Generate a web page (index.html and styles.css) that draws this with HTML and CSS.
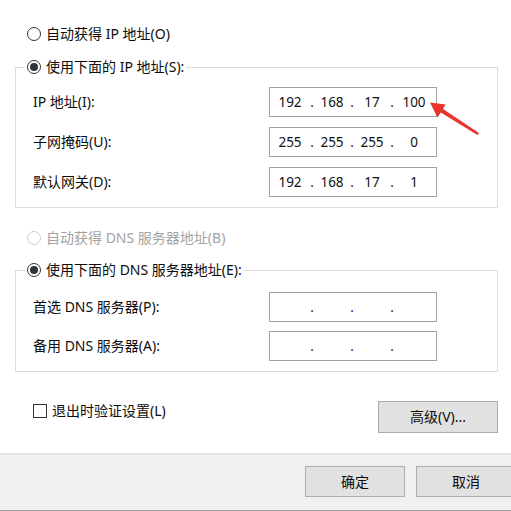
FILE: index.html
```html
<!DOCTYPE html>
<html lang="zh-CN">
<head>
<meta charset="utf-8">
<title>IPv4 属性</title>
<link rel="stylesheet" href="styles.css">
</head>
<body>
<div class="dialog">
  <div class="main">
    <label class="opt opt-top"><span class="radio"></span><span>自动获得 IP 地址(O)</span></label>

    <fieldset class="group group-ip">
      <legend><label class="opt"><span class="radio on"></span><span>使用下面的 IP 地址(S):</span></label></legend>
      <div class="fields">
        <div class="label">IP 地址(I):</div>
        <div class="ip"><span>192</span><i>.</i><span>168</span><i>.</i><span>17</span><i>.</i><span>100</span></div>
        <div class="label">子网掩码(U):</div>
        <div class="ip"><span>255</span><i>.</i><span>255</span><i>.</i><span>255</span><i>.</i><span>0</span></div>
        <div class="label">默认网关(D):</div>
        <div class="ip"><span>192</span><i>.</i><span>168</span><i>.</i><span>17</span><i>.</i><span>1</span></div>
      </div>
    </fieldset>

    <label class="opt opt-top opt-dns disabled"><span class="radio"></span><span>自动获得 DNS 服务器地址(B)</span></label>

    <fieldset class="group group-dns">
      <legend><label class="opt"><span class="radio on"></span><span>使用下面的 DNS 服务器地址(E):</span></label></legend>
      <div class="fields fields-dns">
        <div class="label">首选 DNS 服务器(P):</div>
        <div class="ip"><span></span><i>.</i><span></span><i>.</i><span></span><i>.</i><span></span></div>
        <div class="label">备用 DNS 服务器(A):</div>
        <div class="ip"><span></span><i>.</i><span></span><i>.</i><span></span><i>.</i><span></span></div>
      </div>
    </fieldset>

    <div class="bottom-row">
      <label class="check-opt"><span class="checkbox"></span><span>退出时验证设置(L)</span></label>
      <button class="btn btn-adv" type="button">高级(V)...</button>
    </div>
  </div>

  <div class="footer">
    <button class="btn btn-foot" type="button">确定</button>
    <button class="btn btn-foot" type="button">取消</button>
  </div>
</div>

<svg class="arrow" width="511" height="511" viewBox="0 0 511 511" aria-hidden="true">
  <polygon points="430,102.5 445.5,104.5 443,109 479,133 477.4,135 440.8,112.4 437.5,117.5" fill="#e9352d"/>
</svg>
</body>
</html>
```

FILE: styles.css
```css
html, body {
  margin: 0;
  padding: 0;
  width: 511px;
  height: 511px;
  overflow: hidden;
  background: #ffffff;
}

body {
  position: relative;
  font-family: "Noto Sans", "Noto Sans CJK SC", sans-serif;
  font-size: 14px;
  color: #0d0d0d;
}

.dialog {
  width: 520px;
  display: flex;
  flex-direction: column;
}

.main {
  padding: 24px 22px 0 15px;
}

.opt {
  display: flex;
  align-items: center;
  gap: 5px;
  line-height: 20px;
  height: 20px;
  white-space: nowrap;
}

.opt-top {
  padding-left: 12px;
}

.opt-dns {
  margin-top: 20px;
}

.disabled {
  color: #a3a3a3;
}

.radio {
  box-sizing: border-box;
  width: 14px;
  height: 14px;
  border: 1px solid #333333;
  border-radius: 50%;
  background: #ffffff;
  display: flex;
  align-items: center;
  justify-content: center;
  flex: none;
}

.radio.on::after {
  content: "";
  width: 8px;
  height: 8px;
  border-radius: 50%;
  background: #333333;
}

.disabled .radio {
  border-color: #cccccc;
}

.group {
  margin: 13px 0 0;
  padding: 0;
  border: 1px solid #dcdcdc;
  min-width: 0;
}

.group-dns {
  margin-top: 12px;
}

.group legend {
  margin-left: 9px;
  padding: 0 2px;
  line-height: 20px;
}

.fields {
  display: grid;
  grid-template-columns: 236px 168px;
  grid-auto-rows: 30px;
  row-gap: 10px;
  align-items: center;
  padding: 10px 0 10px 17px;
}

.fields-dns {
  padding-top: 12px;
  row-gap: 9px;
}

.label {
  line-height: 20px;
  white-space: nowrap;
}

.ip {
  box-sizing: border-box;
  height: 30px;
  border: 1px solid #a2a2a2;
  background: #ffffff;
  display: grid;
  grid-template-columns: 38px 6px 34px 6px 34px 6px 38px;
  align-items: center;
  padding-left: 1px;
  font-size: 13.5px;
  color: #111111;
  text-align: center;
}

.ip i {
  font-style: normal;
  color: #333;
}

.bottom-row {
  margin-top: 29px;
  display: flex;
  justify-content: space-between;
  align-items: flex-start;
}

.check-opt {
  display: flex;
  align-items: center;
  gap: 5px;
  line-height: 20px;
  padding-left: 18px;
}

.checkbox {
  box-sizing: border-box;
  width: 14px;
  height: 14px;
  border: 1px solid #333333;
  background: #ffffff;
}

.btn {
  box-sizing: border-box;
  font-family: "Noto Sans", "Noto Sans CJK SC", sans-serif;
  font-size: 14px;
  color: #0d0d0d;
  background: #e1e1e1;
  border: 1px solid #adadad;
  border-radius: 0;
  padding: 0;
  line-height: 20px;
}

.btn-adv {
  width: 120px;
  height: 32px;
}

.footer {
  margin-top: 20px;
  height: 58px;
  box-sizing: border-box;
  background: #f0f0f0;
  border-top: 2px solid #e4e4e4;
  border-bottom: 1px solid #a0a0a0;
  display: flex;
  justify-content: flex-end;
  align-items: flex-start;
  gap: 11px;
  padding: 11px 4px 0 0;
}

.btn-foot {
  width: 100px;
  height: 31px;
}

.arrow {
  position: absolute;
  left: 0;
  top: 0;
  pointer-events: none;
}
```
